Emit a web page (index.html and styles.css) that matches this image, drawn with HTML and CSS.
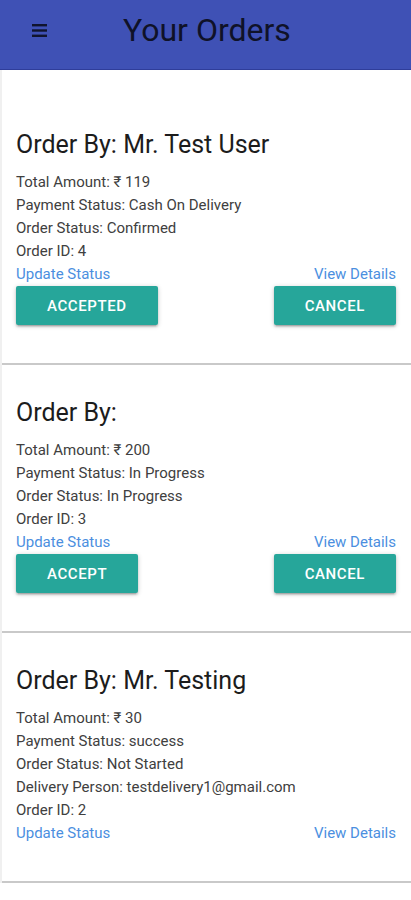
FILE: index.html
```html
<!DOCTYPE html>
<html lang="en">
<head>
    <meta charset="UTF-8">
    <title>Your Orders</title>
    <link rel="stylesheet" href="styles.css">
</head>
<body>

<div class="nav">
    <span class="nav__menu">
        <svg width="15" height="13" viewBox="0 0 15 13">
            <rect x="0" y="0" width="15" height="2.4" fill="#10142e"/>
            <rect x="0" y="5.3" width="15" height="2.4" fill="#10142e"/>
            <rect x="0" y="10.6" width="15" height="2.4" fill="#10142e"/>
        </svg>
    </span>
    <h1 class="nav__title">Your Orders</h1>
</div>

<div class="orders">
    <div class="order">
        <h2 class="order__by">Order By: Mr. Test User</h2>
        <div class="order__info">
            <p>Total Amount: &#8377; 119</p>
            <p>Payment Status: Cash On Delivery</p>
            <p>Order Status: Confirmed</p>
            <p>Order ID: 4</p>
        </div>
        <div class="order__links">
            <a href="#">Update Status</a>
            <a href="#">View Details</a>
        </div>
        <div class="order__actions">
            <button class="btn">Accepted</button>
            <button class="btn">Cancel</button>
        </div>
    </div>

    <div class="order">
        <h2 class="order__by">Order By:</h2>
        <div class="order__info">
            <p>Total Amount: &#8377; 200</p>
            <p>Payment Status: In Progress</p>
            <p>Order Status: In Progress</p>
            <p>Order ID: 3</p>
        </div>
        <div class="order__links">
            <a href="#">Update Status</a>
            <a href="#">View Details</a>
        </div>
        <div class="order__actions">
            <button class="btn">Accept</button>
            <button class="btn">Cancel</button>
        </div>
    </div>

    <div class="order">
        <h2 class="order__by">Order By: Mr. Testing</h2>
        <div class="order__info">
            <p>Total Amount: &#8377; 30</p>
            <p>Payment Status: success</p>
            <p>Order Status: Not Started</p>
            <p>Delivery Person: testdelivery1@gmail.com</p>
            <p>Order ID: 2</p>
        </div>
        <div class="order__links">
            <a href="#">Update Status</a>
            <a href="#">View Details</a>
        </div>
    </div>
</div>

</body>
</html>
```

FILE: styles.css
```css
* {
    box-sizing: border-box;
    margin: 0;
    padding: 0;
}

body {
    background: #ffffff;
    font-family: Roboto, "Noto Sans", sans-serif;
    color: #222;
}

.nav {
    display: flex;
    align-items: center;
    height: 70px;
    padding: 0 0 8px 32px;
    background: #3f51b5;
    border-bottom: 1px solid #2f3d9a;
}
.nav__menu {
    display: flex;
    width: 15px;
}
.nav__title {
    margin-left: 76px;
    font-size: 32px;
    font-weight: 400;
    line-height: 61px;
    color: #0f1228;
}

.orders {
    padding-top: 27px;
    border-left: 2px solid #f0f0f0;
}
.order {
    padding: 32px 15px 38px 14px;
    border-bottom: 2px solid #c9c9c9;
}
.order:last-child {
    padding-bottom: 36px;
}
.order__by {
    font-size: 25px;
    font-weight: 400;
    line-height: 32px;
    color: #1c1c1c;
}
.order__info {
    margin-top: 10px;
    font-size: 15px;
    line-height: 23px;
    color: #404040;
}
.order__links {
    display: flex;
    justify-content: space-between;
    font-size: 15px;
    line-height: 23px;
}
.order__links a {
    color: #4b8fdf;
    text-decoration: none;
}
.order__actions {
    display: flex;
    justify-content: space-between;
}
.btn {
    height: 39px;
    padding: 0 31px;
    background: #26a69a;
    color: #fff;
    border: none;
    border-radius: 2px;
    font-family: Roboto, "Noto Sans", sans-serif;
    font-size: 15px;
    font-weight: 500;
    letter-spacing: .6px;
    text-transform: uppercase;
    box-shadow: 0 2px 2px 0 rgba(0,0,0,.14), 0 3px 1px -2px rgba(0,0,0,.12), 0 1px 5px 0 rgba(0,0,0,.2);
    cursor: pointer;
}
```
